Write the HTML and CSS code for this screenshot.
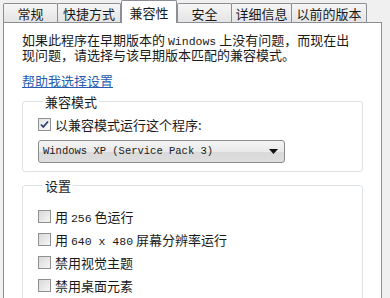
FILE: index.html
```html
<!DOCTYPE html>
<html lang="zh-CN">
<head>
<meta charset="utf-8">
<link rel="stylesheet" href="styles.css">
</head>
<body>
<div class="tabs">
  <div class="tab t1">常规</div>
  <div class="tab t2">快捷方式</div>
  <div class="tab t3 active">兼容性</div>
  <div class="tab t4">安全</div>
  <div class="tab t5">详细信息</div>
  <div class="tab t6">以前的版本</div>
</div>
<div class="panel">
  <p class="intro">如果此程序在早期版本的 <span class="mono">Windows</span> 上没有问题，而现在出现问题，请选择与该早期版本匹配的兼容模式。</p>
  <a class="link" href="#">帮助我选择设置</a>
  <fieldset class="group g1">
    <legend>兼容模式</legend>
    <div class="row">
      <span class="cb checked"><svg width="11" height="11" viewBox="0 0 11 11"><path d="M2 5.5 L4.3 8 L9 2.5" fill="none" stroke="#2a3f6b" stroke-width="1.8"/></svg></span>
      <span>以兼容模式运行这个程序:</span>
    </div>
    <div class="select">
      <span class="mono sel-text">Windows XP (Service Pack 3)</span>
      <svg class="arrow" width="9" height="5" viewBox="0 0 9 5"><path d="M0 0 H9 L4.5 5 Z" fill="#111"/></svg>
    </div>
  </fieldset>
  <fieldset class="group g2">
    <legend>设置</legend>
    <div class="row"><span class="cb"></span><span>用 <span class="mono">256</span> 色运行</span></div>
    <div class="row"><span class="cb"></span><span>用 <span class="mono">640 x 480</span> 屏幕分辨率运行</span></div>
    <div class="row"><span class="cb"></span><span>禁用视觉主题</span></div>
    <div class="row"><span class="cb"></span><span>禁用桌面元素</span></div>
  </fieldset>
</div>
</body>
</html>
```
FILE: styles.css
```css
html, body {
  margin: 0;
  padding: 0;
  background: #f0f0f0;
  overflow: hidden;
  height: 298px;
}
body {
  font-family: "Noto Sans CJK SC", "Liberation Sans", sans-serif;
  font-size: 13px;
  color: #1a1a1a;
}
.mono {
  font-family: "Liberation Mono", "DejaVu Sans Mono", monospace;
  font-size: 11.5px;
  line-height: 1;
}
.tabs {
  display: flex;
  align-items: flex-end;
  height: 22px;
  padding-left: 3px;
  position: relative;
  z-index: 2;
}
.tab {
  box-sizing: border-box;
  height: 19px;
  border: 1px solid #8c8e94;
  border-bottom: none;
  background: linear-gradient(#f6f6f6, #e4e4e4);
  margin-right: -1px;
  display: flex;
  align-items: center;
  justify-content: center;
  line-height: 1;
  border-radius: 2px 2px 0 0;
}
.tab.active {
  height: 23px;
  margin-bottom: -1px;
  background: #fff;
  position: relative;
  z-index: 3;
  margin-left: 1px;
  margin-right: 0;
}
.t1 { width: 55px; }
.t2 { width: 64px; }
.t3 { width: 56px; }
.t4 { width: 55px; }
.t5 { width: 61px; }
.t6 { width: 76px; }
.panel {
  position: relative;
  z-index: 1;
  margin-left: 3px;
  width: 379px;
  height: 300px;
  border: 1px solid #8c8e94;
  background: #fff;
  padding: 10px 18px 0 18px;
  box-sizing: border-box;
}
.intro {
  margin: 0;
  line-height: 14px;
  width: 335px;
}
.link {
  display: inline-block;
  margin-top: 11px;
  color: #2a5db0;
  text-decoration: underline;
  line-height: 16px;
}
.group {
  margin: 0;
  border: 1px solid #dde2e6;
  border-radius: 3px;
  padding: 0 0 0 15px;
  min-width: 0;
}
.group legend {
  padding: 0 2px;
  margin-left: 5px;
  line-height: 16px;
}
.g1 {
  margin-top: 4px;
  height: 78px;
  box-sizing: border-box;
}
.g2 {
  margin-top: 6px;
  height: 140px;
  box-sizing: border-box;
  padding-top: 11px;
}
.row {
  display: flex;
  align-items: center;
  height: 23px;
  gap: 4px;
}
.g1 .row {
  margin-top: 5px;
  height: 20px;
}
.cb {
  width: 11px;
  height: 11px;
  border: 1px solid #8e8f91;
  background: linear-gradient(135deg, #d8d8d8, #f6f6f6);
  display: inline-flex;
  align-items: center;
  justify-content: center;
  flex: none;
}
.cb.checked {
  background: linear-gradient(135deg, #e2e6ea, #fafafa);
}
.select {
  margin-top: 5px;
  width: 247px;
  height: 23px;
  box-sizing: border-box;
  border: 1px solid #8b8b8b;
  border-radius: 3px;
  background: linear-gradient(#f4f4f4 0%, #e9e9e9 50%, #d9d9d9 51%, #dedede 100%);
  display: flex;
  align-items: center;
  justify-content: space-between;
  padding: 0 6px 0 4px;
}
.sel-text {
  font-size: 10.5px;
}
```
